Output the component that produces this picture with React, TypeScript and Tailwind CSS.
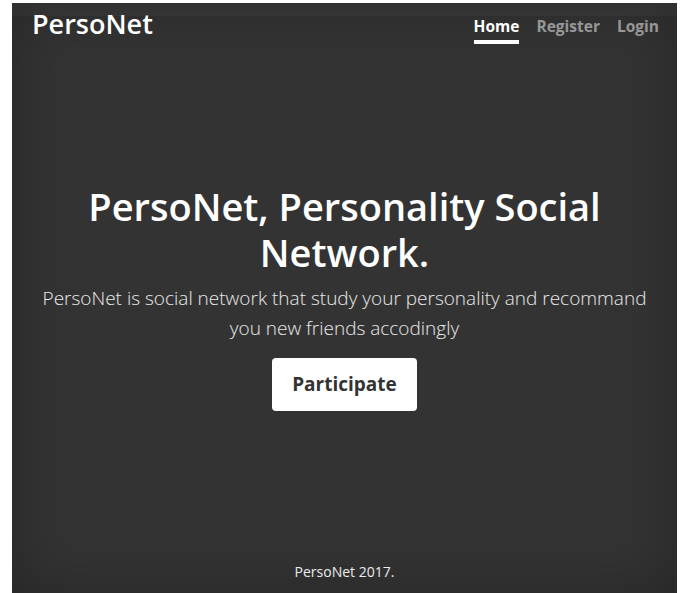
const font = { fontFamily: '"Open Sans", "Noto Sans", sans-serif' };

function Masthead() {
  return (
    <header className="flex items-start justify-between pt-[4px] pl-5 pr-[18px]">
      <h3 className="text-[27px] leading-[34px] font-semibold text-white">PersoNet</h3>
      <nav className="flex gap-[17px] pt-[8px] text-[15.5px] font-bold">
        <a className="border-b-4 border-white pb-[3px] leading-[22px] text-white">Home</a>
        <a className="leading-[22px] text-white/50">Register</a>
        <a className="leading-[22px] text-white/50">Login</a>
      </nav>
    </header>
  );
}

export default function App() {
  return (
    <div className="h-[593px] bg-white pl-[12px] pr-[6px] pt-[3px]" style={font}>
      <div className="flex h-full flex-col bg-[linear-gradient(to_bottom,#3a3a3a_13px,#333333_13px)] shadow-[inset_0_0_60px_rgba(0,0,0,0.25)]">
        <Masthead />
        <main className="mt-auto flex flex-col items-center px-4 pb-[12px] text-center">
          <h1 className="text-[38px] leading-[46px] font-semibold text-white">
            PersoNet, Personality Social
            <br />
            Network.
          </h1>
          <p className="mt-2 text-[19px] leading-[30px] font-light text-white/90">
            PersoNet is social network that study your personality and recommand
            <br />
            you new friends accodingly
          </p>
          <a className="mt-[15px] rounded bg-white px-5 py-3 text-[19px] leading-[29px] font-bold text-[#333333]">
            Participate
          </a>
        </main>
        <footer className="mt-auto pb-[10px] text-center text-[14px] leading-[22px] text-white/90">
          PersoNet 2017.
        </footer>
      </div>
    </div>
  );
}
